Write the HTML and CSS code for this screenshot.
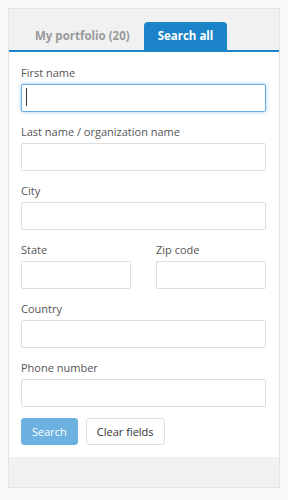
FILE: index.html
```html
<!DOCTYPE html>
<html>
<head>
<meta charset="utf-8">
<link rel="stylesheet" href="styles.css">
</head>
<body>
<div class="card">
  <div class="tabs">
    <div class="tab">My portfolio (20)</div>
    <div class="tab active">Search all</div>
  </div>
  <form class="form">
    <div class="group">
      <label class="label">First name</label>
      <div class="field-wrap">
        <input class="input focused" type="text">
        <span class="caret"></span>
      </div>
    </div>
    <div class="group">
      <label class="label">Last name / organization name</label>
      <input class="input" type="text">
    </div>
    <div class="group">
      <label class="label">City</label>
      <input class="input" type="text">
    </div>
    <div class="row">
      <div class="group col">
        <label class="label">State</label>
        <input class="input" type="text">
      </div>
      <div class="group col">
        <label class="label">Zip code</label>
        <input class="input" type="text">
      </div>
    </div>
    <div class="group">
      <label class="label">Country</label>
      <input class="input" type="text">
    </div>
    <div class="group">
      <label class="label">Phone number</label>
      <input class="input" type="text">
    </div>
    <div class="actions">
      <button type="button" class="btn btn-primary">Search</button>
      <button type="button" class="btn btn-default">Clear fields</button>
    </div>
  </form>
  <div class="footer"></div>
</div>
</body>
</html>
```
FILE: styles.css
```css
html, body {
  margin: 0;
  padding: 0;
}
body {
  margin: 8px;
  background: #f8f8f8;
  font-family: "Open Sans", "Noto Sans", sans-serif;
  color: #555;
}
.card {
  border: 1px solid #e4e4e4;
  background: #fff;
  box-shadow: 0 1px 2px rgba(0,0,0,0.04);
}
.tabs {
  display: flex;
  background: #f1f1f1;
  padding: 13px 12px 0 12px;
  border-bottom: 2px solid #1b84c8;
}
.tab {
  font-size: 11.5px;
  font-weight: 700;
  line-height: 28px;
  padding: 0 14px;
  color: #999;
  border-radius: 4px 4px 0 0;
}
.tab.active {
  background: #1b84c8;
  color: #fff;
}
.form {
  padding: 12px 13px 12px 12px;
  margin: 0;
}
.group {
  display: flex;
  flex-direction: column;
  margin-bottom: 11px;
}
.label {
  font-size: 11px;
  line-height: 17px;
  color: #555;
  margin-bottom: 3px;
}
.field-wrap {
  position: relative;
}
.input {
  display: block;
  box-sizing: border-box;
  width: 100%;
  height: 28px;
  margin: 0;
  border: 1px solid #ddd;
  border-radius: 2px;
  background: #fff;
  font-family: inherit;
  font-size: 12px;
  padding: 0 6px;
  outline: none;
}
.input.focused {
  border-color: #66afe9;
  box-shadow: 0 0 4px rgba(102,175,233,0.6);
}
.caret {
  position: absolute;
  left: 5px;
  top: 4px;
  width: 1px;
  height: 18px;
  background: #333;
}
.row {
  display: flex;
  gap: 25px;
}
.col {
  flex: 1;
}
.actions {
  display: flex;
  gap: 8px;
  margin-top: 1px;
}
.btn {
  font-family: inherit;
  font-size: 11px;
  height: 27px;
  border-radius: 3px;
  padding: 0 10px;
  margin: 0;
  cursor: pointer;
}
.btn-primary {
  background: #6cb1df;
  border: 1px solid #6cb1df;
  color: #fff;
}
.btn-default {
  background: #fff;
  border: 1px solid #ddd;
  color: #333;
}
.footer {
  height: 30px;
  background: #f1f1f1;
}
```
